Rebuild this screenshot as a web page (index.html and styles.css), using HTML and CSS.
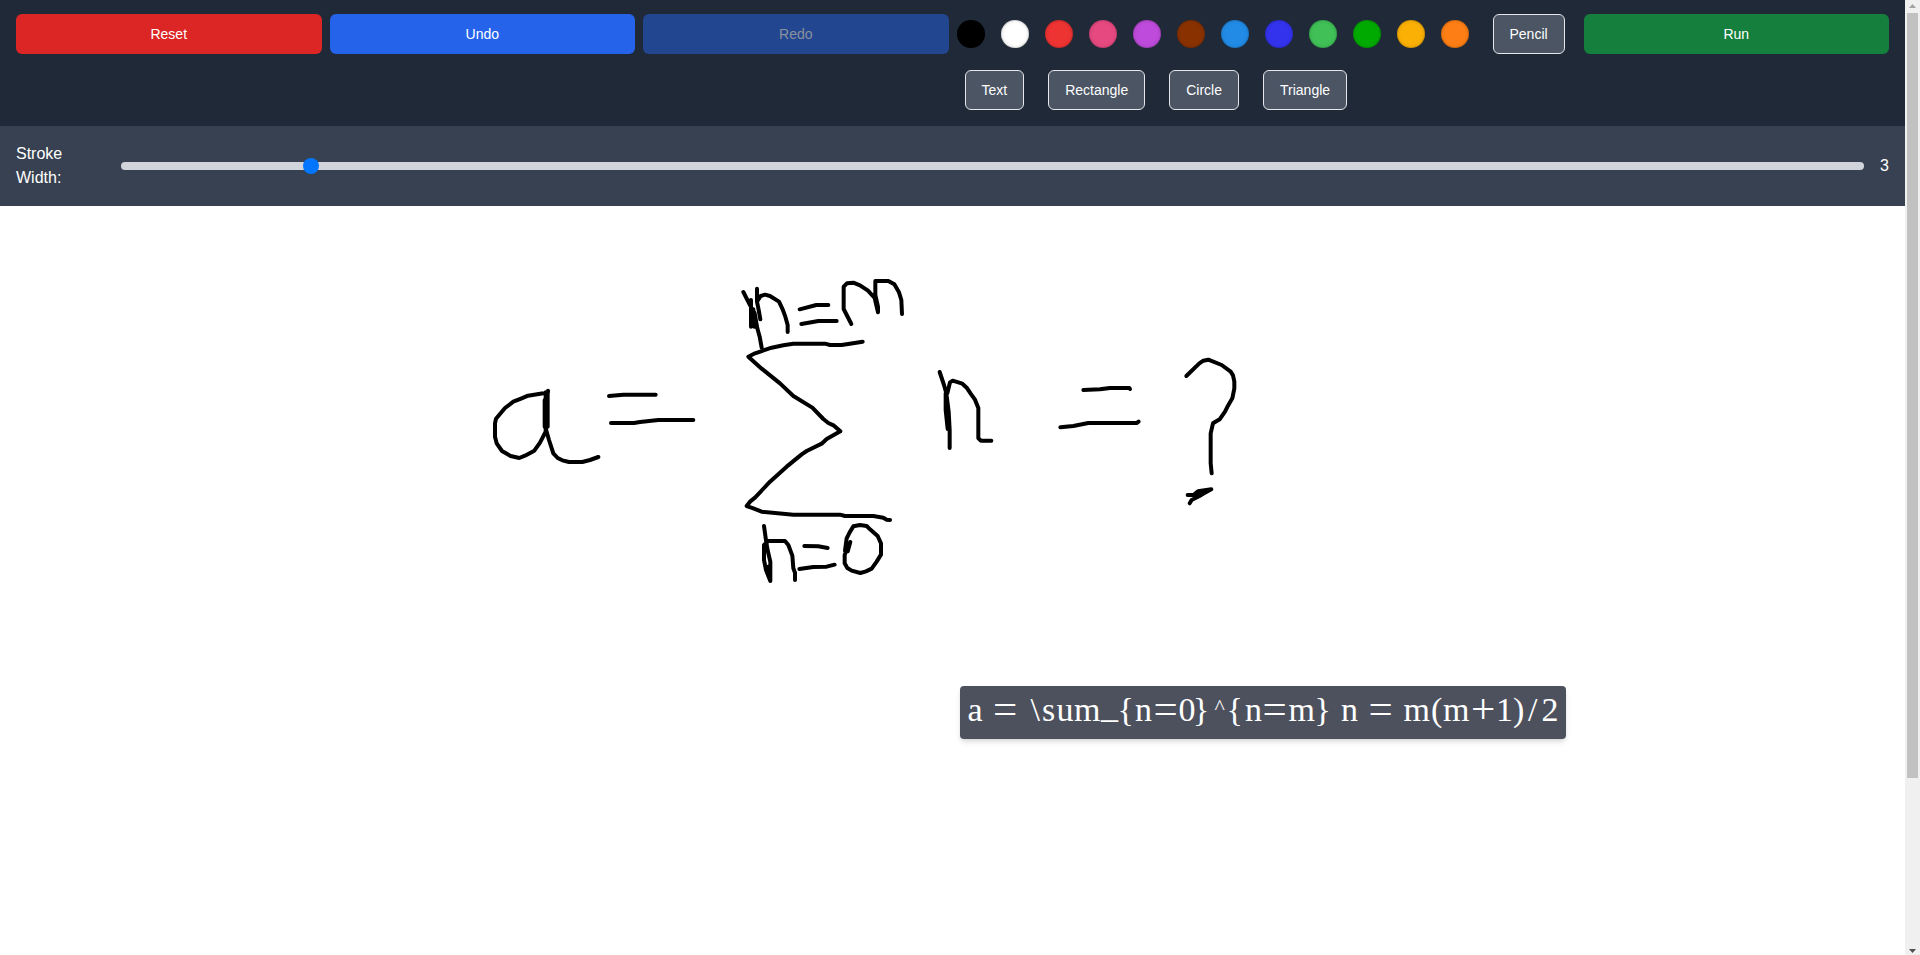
FILE: index.html
```html
<!DOCTYPE html>
<html lang="en">
<head>
<meta charset="utf-8">
<title>Canvas Calculator</title>
<link rel="stylesheet" href="styles.css">
</head>
<body>
<div class="app">
  <main class="page">
    <header class="toolbar">
      <button class="btn btn-reset">Reset</button>
      <button class="btn btn-undo">Undo</button>
      <button class="btn btn-redo" disabled>Redo</button>
      <div class="tools">
        <i class="swatch black"></i><i class="swatch white"></i><i class="swatch red"></i><i class="swatch pink"></i><i class="swatch purple"></i><i class="swatch brown"></i><i class="swatch sky"></i><i class="swatch blue"></i><i class="swatch mint"></i><i class="swatch green"></i><i class="swatch yellow"></i><i class="swatch orange"></i>
        <button class="tool">Pencil</button>
        <button class="tool">Text</button>
        <button class="tool">Rectangle</button>
        <button class="tool">Circle</button>
        <button class="tool">Triangle</button>
      </div>
      <button class="btn btn-run">Run</button>
    </header>
    <section class="stroke">
      <label class="stroke-label" for="width">Stroke Width:</label>
      <input class="stroke-range" id="width" type="range" min="1" max="20" value="3">
      <span class="stroke-value">3</span>
    </section>
    <section class="board">
      <svg class="drawing" viewBox="0 206 1905 749">
        <!-- a = -->
        <g transform="translate(480 360) scale(.33333)">
          <path d="M204 92V97L190 100L144 107L125 115L100 125L75 144L48 176L45 190V230L50 250L66 273L92 288L118 294L135 287L163 272L180 248L197 215V97M203 97V200M194 120V200M197 205L207 240L220 280L233 294L247 301L267 306H307L330 300L355 291"/>
          <path d="M387 108L430 104H527M393 189H462L480 186L535 180H640"/>
        </g>
        <!-- sigma and upper bound -->
        <g transform="translate(730 270) scale(.33333)">
          <path d="M40 66L60 105L74 130L82 175L89 200L95 233M63 90V170M70 118L73 170M81 56V95L86 120L91 148M81 95L92 78L105 74L120 78L147 95L158 118L166 140L173 165V186"/>
          <path d="M209 118L259 105H295M214 162L265 153H320M364 162L341 117V50L351 40L370 38L390 46L414 62L434 84L444 127V110L436 75V33H475L493 43L507 67L514 90L516 132"/>
          <path d="M398 215L335 225H300L285 221H190L160 226L125 233L75 250L55 260L95 296L150 340L190 378L247 413L280 447L295 459L312 467L331 484L290 507L275 521L230 543L215 553L170 590L120 635L75 683L60 695L50 708L70 715L95 725L190 734H330L345 738H430L460 743L470 749L480 750"/>
        </g>
        <!-- lower bound -->
        <g transform="translate(730 430) scale(.33333)">
          <path d="M102 288L110 345L115 370L121 395V453L108 420L102 390V345L115 333H165L175 345L187 377L190 415L195 428V450M114 410V430"/>
          <path d="M223 348L265 349L293 354M208 417L250 411L290 410L314 404M361 336L353 364L345 362L350 325L359 307L370 289L390 285L410 288L420 298L443 318L453 340V374L440 395L425 416L408 424L391 429L365 422L352 414L344 400V375L353 350"/>
        </g>
        <!-- n = ? -->
        <g transform="translate(920 350) scale(.33333)">
          <path d="M59 66L72 105L79 130L86 185L89 240V294M77 130V180L83 237M82 130L90 97L98 92L127 101L140 113L152 131L165 149L175 174V265L183 272H214"/>
          <path d="M490 120L540 118L570 114H628L630 117M421 232L460 228L505 219H650L656 215"/>
          <path d="M799 78L838 40L850 32L865 29L905 45L932 65L939 76L943 95V115L937 145L924 167L915 185L899 208L879 220L872 250V340L875 370M803 435H820L834 424L874 418L852 430L837 439L815 450L809 460M825 434L850 424"/>
        </g>
      </svg>
      <div class="result">
        <svg class="formula" viewBox="959.5 686 606 53"><text y="720.7"><tspan x="967">a</tspan> <tspan class="op" x="992.6" y="722.8">=</tspan> <tspan x="1030 1041.5 1056 1073.5" y="720.7">\sum</tspan><tspan x="1100.5" y="718">_</tspan><tspan x="1117 1134.5" y="720.7">{n</tspan><tspan class="op" x="1153" y="722.8">=</tspan><tspan x="1178 1192.5" y="720.7">0}</tspan><tspan class="caret" x="1214" y="714">^</tspan><tspan x="1226 1244.5" y="720.7">{n</tspan><tspan class="op" x="1262" y="722.8">=</tspan><tspan x="1288 1314" y="720.7">m}</tspan> <tspan x="1340.5">n</tspan> <tspan class="op" x="1368" y="722.8">=</tspan> <tspan x="1403 1430.5 1442.5" y="720.7">m(m</tspan><tspan class="op" x="1470.5" y="722.8">+</tspan><tspan x="1495.5 1512.5 1527.5 1541" y="720.7">1)/2</tspan></text></svg>
      </div>
    </section>
  </main>
  <aside class="scrollbar">
    <svg class="arrow" viewBox="0 0 15 13"><path class="up" d="M4 8L7.5 4L11 8Z"/></svg>
    <div class="thumb"></div>
    <svg class="arrow" viewBox="0 0 15 13"><path class="down" d="M4 7L7.5 11L11 7Z"/></svg>
  </aside>
</div>
</body>
</html>
```
FILE: styles.css
```css
* { box-sizing: border-box; }
body { margin: 0; overflow: hidden; font-family: "Liberation Sans", Arial, sans-serif; }
button { font: 14px/20px "Liberation Sans", Arial, sans-serif; color: #fff; height: 40px; }
.app { display: flex; width: 1920px; height: 955px; background: #fff; }
.page { flex: 1; min-width: 0; display: flex; flex-direction: column; }

.toolbar { display: grid; grid-template-columns: repeat(6, 1fr); gap: 8px; align-items: start; height: 126px; padding: 14px 16px 16px; background: #1f2937; }
.btn { border: 0; border-radius: 6px; }
.btn-reset { background: #dc2626; }
.btn-undo { background: #2563eb; }
.btn-redo:disabled { background: #224690; color: #8a919f; }
.btn-run { background: #15803d; }
.tools { grid-column: span 2; display: flex; flex-wrap: wrap; align-items: center; gap: 16px; }
.tool { margin-left: 8px; padding: 0 16px; background: #4b5563; border: 1px solid #e5e7eb; border-radius: 6px; }
.swatch { width: 28px; height: 28px; border-radius: 50%; box-shadow: inset 0 0 0 1px rgba(0,0,0,.1), inset 0 0 4px rgba(0,0,0,.15); }
.black { background: #000; }
.white { background: #fff; }
.red { background: #ee3333; }
.pink { background: #e64980; }
.purple { background: #be4bdb; }
.brown { background: #893200; }
.sky { background: #228be6; }
.blue { background: #3333ee; }
.mint { background: #40c057; }
.green { background: #00aa00; }
.yellow { background: #fab005; }
.orange { background: #fd7e14; }

.stroke { display: flex; align-items: center; gap: 16px; height: 80px; padding: 16px; background: #374151; color: #fff; font-size: 16px; line-height: 24px; }
.stroke-label { width: 89px; }
.stroke-range { flex: 1; min-width: 0; height: 8px; margin: 0; appearance: none; background: #d1d5db; border-radius: 4px; }
.stroke-range::-webkit-slider-thumb { appearance: none; width: 16px; height: 16px; border-radius: 50%; background: #0075ff; }

.board { position: relative; flex: 1; min-height: 0; background: #fff; }
.drawing { display: block; width: 1905px; height: 749px; fill: none; stroke: #000; stroke-width: 12; stroke-linecap: round; stroke-linejoin: round; }
.result { position: absolute; left: 959.5px; top: 480px; width: 606px; height: 53px; background: #4d515d; border-radius: 4px; box-shadow: 0 4px 6px -1px rgba(0,0,0,.1), 0 2px 4px -1px rgba(0,0,0,.1); }
.formula { display: block; width: 606px; height: 53px; fill: #fff; font: 34px "Liberation Serif", "Times New Roman", serif; }
.op { font-size: 43px; }
.caret { font-size: 22px; }

.scrollbar { display: flex; flex-direction: column; width: 15px; background: #f0f0f0; }
.arrow { display: block; width: 15px; height: 13px; }
.thumb { width: 11px; height: 765px; margin: 0 2px auto; background: #c1c1c1; }
.up { fill: #a3a3a3; }
.down { fill: #505050; }
```
